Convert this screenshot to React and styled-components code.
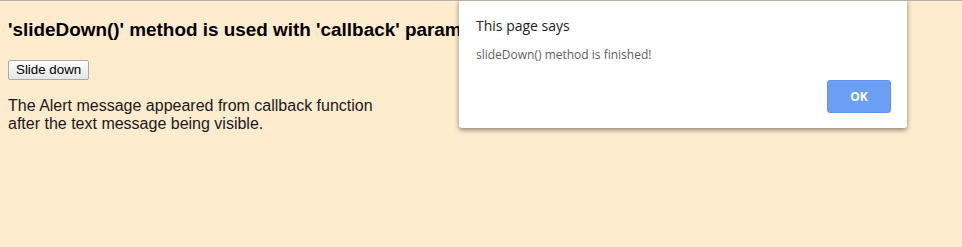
import styled, { createGlobalStyle } from "styled-components";

const GlobalStyle = createGlobalStyle`
  html, body {
    margin: 0;
    padding: 0;
    background: #ffebcd;
    height: 100%;
  }
  body {
    font-family: "Liberation Sans", Arial, sans-serif;
    color: #000;
  }
`

const Page = styled.div`
  position: relative;
  min-height: 247px;
  box-sizing: border-box;
  border-top: 1px solid #b9b2a8;
  padding: 0 8px;
  overflow: hidden;
`

const Heading = styled.h3`
  font-size: 18.9px;
  font-weight: bold;
  margin: 18px 0 18.72px;
  white-space: nowrap;
`

const SlideButton = styled.button`
  font-family: "Liberation Sans", Arial, sans-serif;
  font-size: 13.33px;
  color: #000;
  padding: 1px 7px;
  height: 20px;
  border: 1px solid #a9a9a9;
  border-radius: 2px;
  background: linear-gradient(#fdfdfd, #e6e6e6);
`

const Text = styled.p`
  font-size: 16px;
  line-height: 18px;
  margin: 17px 0;
  color: #1a1a1a;
`

const Dialog = styled.div`
  position: absolute;
  left: 459px;
  top: -1px;
  width: 448px;
  height: 128px;
  background: #fff;
  border-radius: 0 0 3px 3px;
  box-shadow: 0 2px 5px rgba(0, 0, 0, 0.45);
  box-sizing: border-box;
  padding: 16px 16px 0 17px;
  display: flex;
  flex-direction: column;
  font-family: "Open Sans", "Noto Sans", sans-serif;
`

const DialogTitle = styled.div`
  font-size: 14px;
  color: #222;
  line-height: 20px;
`

const DialogMessage = styled.div`
  font-size: 12px;
  color: #606060;
  margin-top: 11px;
  line-height: 16px;
`

const Actions = styled.div`
  display: flex;
  justify-content: flex-end;
  margin-top: 17px;
`

const OkButton = styled.button`
  width: 64px;
  height: 33px;
  border: 1px solid #5f95ef;
  border-radius: 3px;
  background: #6a9ff5;
  color: #fff;
  font-family: "Open Sans", "Noto Sans", sans-serif;
  font-weight: bold;
  font-size: 12px;
`

const App = () => {
  return (
    <>
      <GlobalStyle />
      <Page>
        <Heading>'slideDown()' method is used with 'callback' parameter</Heading>
        <SlideButton>Slide down</SlideButton>
        <Text>
          The Alert message appeared from callback function
          <br />
          after the text message being visible.
        </Text>
        <Dialog>
          <DialogTitle>This page says</DialogTitle>
          <DialogMessage>slideDown() method is finished!</DialogMessage>
          <Actions>
            <OkButton>OK</OkButton>
          </Actions>
        </Dialog>
      </Page>
    </>
  );
};

export default App;
